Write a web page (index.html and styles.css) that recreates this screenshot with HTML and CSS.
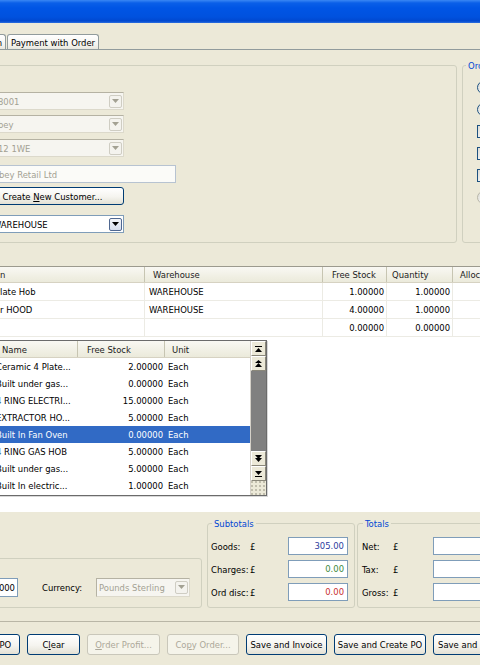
FILE: index.html
```html
<!DOCTYPE html>
<html>
<head>
  <meta charset="utf-8">
  <title>Sales Order</title>
  <link rel="stylesheet" href="styles.css">
</head>
<body>
<div class="titlebar"></div>

<div class="tabstrip">
  <div class="tab tab--cut">n</div>
  <div class="tab">Payment with Order</div>
</div>

<div class="page">
  <div class="top">
    <div class="customer-box">
      <div class="combo is-disabled">
        <span class="combo__text">8001</span>
        <span class="combo__btn"><svg width="7" height="4" viewBox="0 0 7 4"><path d="M0 0h7L3.5 4z"/></svg></span>
      </div>
      <div class="combo is-disabled combo--2">
        <span class="combo__text">bey</span>
        <span class="combo__btn"><svg width="7" height="4" viewBox="0 0 7 4"><path d="M0 0h7L3.5 4z"/></svg></span>
      </div>
      <div class="combo is-disabled combo--3">
        <span class="combo__text">12 1WE</span>
        <span class="combo__btn"><svg width="7" height="4" viewBox="0 0 7 4"><path d="M0 0h7L3.5 4z"/></svg></span>
      </div>
      <div class="field is-disabled">bey Retail Ltd</div>
      <button class="btn btn--customer">Create <u>N</u>ew Customer...</button>
      <div class="combo combo--warehouse">
        <span class="combo__text">WAREHOUSE</span>
        <span class="combo__btn"><svg width="7" height="4" viewBox="0 0 7 4"><path d="M0 0h7L3.5 4z"/></svg></span>
      </div>
    </div>

    <fieldset class="group order-box">
      <legend>Order Type</legend>
      <span class="radio"></span>
      <span class="radio"></span>
      <span class="check"></span>
      <span class="check"></span>
      <span class="check"></span>
      <span class="radio is-disabled"></span>
    </fieldset>
  </div>

  <div class="grid">
    <div class="grid__row grid__head">
      <div class="c1">n</div>
      <div class="c2">Warehouse</div>
      <div class="c3">Free Stock</div>
      <div class="c4">Quantity</div>
      <div class="c5">Alloc</div>
    </div>
    <div class="grid__row">
      <div class="c1 cut">Plate Hob</div>
      <div class="c2">WAREHOUSE</div>
      <div class="c3 num-cell">1.00000</div>
      <div class="c4 num-cell">1.00000</div>
      <div class="c5"></div>
    </div>
    <div class="grid__row">
      <div class="c1">r HOOD</div>
      <div class="c2">WAREHOUSE</div>
      <div class="c3 num-cell">4.00000</div>
      <div class="c4 num-cell">1.00000</div>
      <div class="c5"></div>
    </div>
    <div class="grid__row">
      <div class="c1"></div>
      <div class="c2"></div>
      <div class="c3 num-cell">0.00000</div>
      <div class="c4 num-cell">0.00000</div>
      <div class="c5"></div>
    </div>

    <div class="lookup">
      <div class="lookup__list">
        <div class="lookup__row lookup__head">
          <div class="l-name">Name</div>
          <div class="l-stock">Free Stock</div>
          <div class="l-unit">Unit</div>
        </div>
        <div class="lookup__row">
          <div class="l-name">Ceramic 4 Plate...</div><div class="l-stock">2.00000</div><div class="l-unit">Each</div>
        </div>
        <div class="lookup__row">
          <div class="l-name">Built under gas...</div><div class="l-stock">0.00000</div><div class="l-unit">Each</div>
        </div>
        <div class="lookup__row">
          <div class="l-name">4 RING ELECTRI...</div><div class="l-stock">15.00000</div><div class="l-unit">Each</div>
        </div>
        <div class="lookup__row">
          <div class="l-name">EXTRACTOR HO...</div><div class="l-stock">5.00000</div><div class="l-unit">Each</div>
        </div>
        <div class="lookup__row is-selected">
          <div class="l-name">Built In Fan Oven</div><div class="l-stock">0.00000</div><div class="l-unit">Each</div>
        </div>
        <div class="lookup__row">
          <div class="l-name">4 RING GAS HOB</div><div class="l-stock">5.00000</div><div class="l-unit">Each</div>
        </div>
        <div class="lookup__row">
          <div class="l-name">Built under gas...</div><div class="l-stock">5.00000</div><div class="l-unit">Each</div>
        </div>
        <div class="lookup__row">
          <div class="l-name">Built In electric...</div><div class="l-stock">1.00000</div><div class="l-unit">Each</div>
        </div>
      </div>
      <div class="lookup__scroll">
        <span class="sb-btn"><svg width="7" height="6" viewBox="0 0 7 6"><path d="M0 0h7v1H0zM3.5 2L7 6H0z"/></svg></span>
        <span class="sb-btn"><svg width="7" height="7" viewBox="0 0 7 7"><path d="M3.5 0L7 3H0zM3.5 3L7 7H0z"/></svg></span>
        <span class="sb-track"></span>
        <span class="sb-btn"><svg width="7" height="7" viewBox="0 0 7 7"><path d="M0 0h7L3.5 4zM0 3h7L3.5 7z"/></svg></span>
        <span class="sb-btn"><svg width="7" height="6" viewBox="0 0 7 6"><path d="M0 0h7L3.5 4zM0 5h7v1H0z"/></svg></span>
        <span class="sb-grip"></span>
      </div>
    </div>
  </div>

  <div class="bottom">
    <div class="rate-box">
      <div class="field field--rate">000</div>
      <span class="rate-label">Currency:</span>
      <div class="combo is-disabled combo--currency">
        <span class="combo__text">Pounds Sterling</span>
        <span class="combo__btn"><svg width="7" height="4" viewBox="0 0 7 4"><path d="M0 0h7L3.5 4z"/></svg></span>
      </div>
    </div>

    <fieldset class="group sums sums--sub">
      <legend>Subtotals</legend>
      <span>Goods:</span><span>£</span><div class="amount amount--blue">305.00</div>
      <span>Charges:</span><span>£</span><div class="amount amount--green">0.00</div>
      <span>Ord disc:</span><span>£</span><div class="amount amount--red">0.00</div>
    </fieldset>

    <fieldset class="group sums sums--total">
      <legend>Totals</legend>
      <span>Net:</span><span>£</span><div class="amount"></div>
      <span>Tax:</span><span>£</span><div class="amount"></div>
      <span>Gross:</span><span>£</span><div class="amount"></div>
    </fieldset>
  </div>

  <div class="actions">
    <button class="btn btn--po">Create PO</button>
    <button class="btn btn--clear">C<u>l</u>ear</button>
    <button class="btn btn--profit" disabled><u>O</u>rder Profit...</button>
    <button class="btn btn--copy" disabled>Co<u>p</u>y Order...</button>
    <button class="btn btn--invoice">Save and Invoice</button>
    <button class="btn btn--createpo">Save and Create PO</button>
    <button class="btn btn--createpo">Save and Despatch</button>
  </div>
</div>
</body>
</html>
```

FILE: styles.css
```css
* {
	box-sizing: border-box;
}

body {
	margin: 0;
	width: 480px;
	height: 665px;
	overflow: hidden;
	background: #ece9d8;
	font-family: "DejaVu Sans Condensed", "DejaVu Sans", sans-serif;
	font-size: 9.4px;
	color: #000;
}

button {
	font: inherit;
	color: inherit;
	padding: 0;
}

u {
	text-decoration-thickness: 1px;
	text-underline-offset: 1px;
}

.titlebar {
	height: 23px;
	background: linear-gradient(#3a87f4 0, #0a5fe8 3px, #0055e5 8px, #0051de 17px, #0048cf 21px, #2d6fe0 23px);
}

/* tabs */
.tabstrip {
	display: flex;
	gap: 1px;
	margin-top: 11px;
	height: 16px;
	border-bottom: 1px solid #919b9c;
}

.tab {
	display: flex;
	align-items: center;
	padding: 0 3px 0 3px;
	border: 1px solid #919b9c;
	border-bottom: 0;
	border-radius: 3px 3px 0 0;
	background: linear-gradient(#fff, #f4f3ee 70%, #e8e7de);
	white-space: nowrap;
}

.tab--cut {
	margin-left: -20px;
	width: 26px;
	justify-content: flex-end;
	padding-right: 3px;
}

.page {
	padding-top: 9.5px;
}

/* top part */
.top {
	display: grid;
	grid-template-columns: 487px 120px;
	column-gap: 5px;
	align-items: start;
	margin-left: -30px;
}

.customer-box {
	margin-top: 5.5px;
	height: 178px;
	border: 1px solid #d0d0bf;
	border-radius: 3px;
	padding: 26px 0 0 10px;
	display: flex;
	flex-direction: column;
	align-items: flex-start;
}

.combo {
	width: 143px;
	height: 18px;
	display: flex;
	align-items: center;
	border: 1px solid #7f9db9;
	background: #fff;
	padding: 0 1px 0 16px;
}

.combo__text {
	flex: 1;
	white-space: nowrap;
	overflow: hidden;
}

.combo__btn {
	width: 13px;
	height: 13px;
	display: flex;
	align-items: center;
	justify-content: center;
	border: 1px solid #4f6790;
	border-radius: 2px;
	background: linear-gradient(#f3f5fa, #d6dded);
}

.combo.is-disabled {
	border-color: #b5b2a3 #dcd9cb #dcd9cb #b5b2a3;
	background: #f6f5f0;
	color: #a3a193;
}

.combo.is-disabled .combo__btn {
	border-color: #cfcdc3;
	background: #f4f3ee;
	fill: #a3a193;
}

.combo--2 {
	margin-top: 5px;
}

.combo--3 {
	margin-top: 6px;
}

.combo--warehouse {
	margin-top: 10px;
	padding-left: 11px;
}

.field {
	height: 18px;
	display: flex;
	align-items: center;
	border: 1px solid #7f9db9;
	background: #fff;
	white-space: nowrap;
	overflow: hidden;
}

.field.is-disabled {
	margin-top: 8px;
	width: 195px;
	padding-left: 17px;
	border-color: #b7c3d1;
	background: #fbfbf8;
	color: #a3a193;
}

.btn {
	height: 18px;
	border: 1px solid #003c74;
	border-radius: 3px;
	background: linear-gradient(#fff, #f5f4ef 55%, #e3e1d5);
	white-space: nowrap;
	overflow: hidden;
}

.btn:disabled {
	border-color: #c9c7ba;
	background: #f5f4ea;
	color: #aca899;
}

.btn--customer {
	margin-top: 4px;
	width: 143px;
}

.order-box {
	padding: 10px 0 0 14px;
	display: flex;
	flex-direction: column;
	align-items: flex-start;
	gap: 9px;
	height: 183.5px;
}

.order-box legend {
	margin-left: -11px;
}

.radio,
.check {
	flex: none;
	width: 13px;
	height: 13px;
	border: 1px solid #1c5180;
	background: linear-gradient(135deg, #dcdcd6, #fff);
}

.radio {
	border-radius: 50%;
}

.radio.is-disabled {
	border-color: #b8b6a9;
}

/* groupboxes */
.group {
	margin: 0;
	min-width: 0;
	border: 1px solid #d0d0bf;
	border-radius: 3px;
}

.group legend {
	padding: 0 2px;
	color: #0046d5;
	line-height: 11px;
	white-space: nowrap;
}

/* order lines grid */
.grid {
	position: relative;
	margin-top: 23px;
	height: 246px;
	background: #fff;
	border-top: 1px solid #9c9a8e;
}

.grid__row {
	display: flex;
	height: 18px;
	border-bottom: 1px solid #ecebe4;
}

.grid__row > div {
	display: flex;
	align-items: center;
	white-space: nowrap;
	overflow: hidden;
	border-right: 1px solid #ecebe4;
	padding-left: 4px;
}

.grid__head {
	height: 16px;
	background: linear-gradient(#f9f8f3, #ebeadb);
	border-bottom: 1px solid #d6d2c2;
}

.grid__head > div {
	border-right-color: #c7c5b2;
	color: #222;
}

.c1 {
	width: 145px;
	padding-left: 0 !important;
}

.c2 {
	width: 178px;
}

.c3 {
	width: 64px;
}

.c4 {
	width: 66px;
}

.c5 {
	flex: 1;
	border-right: 0 !important;
}

.grid__head .c2 {
	padding-left: 8px;
}

.grid__head .c3 {
	padding-left: 9px;
}

.grid__head .c4 {
	padding-left: 5px;
}

.grid__head .c5 {
	padding-left: 7px;
}

.cut {
	text-indent: -5px;
}

.num-cell {
	justify-content: flex-end;
	padding: 0 2px 0 0 !important;
}

/* product lookup dropdown */
.lookup {
	position: absolute;
	top: 73px;
	left: -6px;
	width: 273px;
	height: 156px;
	display: flex;
	border: 1px solid #6b6b6b;
	background: #fff;
	box-shadow: 1px 1px 0 #d8d8d8;
}

.lookup__list {
	flex: 1;
	overflow: hidden;
}

.lookup__row {
	display: flex;
	height: 17px;
	align-items: center;
	white-space: nowrap;
}

.lookup__head {
	background: linear-gradient(#f9f8f3, #ebeadb);
	border-bottom: 1px solid #d6d2c2;
	color: #222;
}

.lookup__row > div {
	overflow: hidden;
}

.l-name {
	width: 83px;
	padding-left: 1px;
}

.l-stock {
	width: 87px;
	text-align: right;
	padding-right: 2px;
}

.l-unit {
	flex: 1;
	padding-left: 3px;
}

.lookup__head > div {
	height: 100%;
	display: flex;
	align-items: center;
	border-right: 1px solid #c7c5b2;
}

.lookup__head .l-name {
	padding-left: 7px;
}

.lookup__head .l-stock {
	padding-left: 9px;
	justify-content: flex-start;
}

.lookup__head .l-unit {
	padding-left: 7px;
	border-right: 0;
}

.is-selected {
	background: #316ac5;
	color: #fff;
}

.lookup__scroll {
	width: 16px;
	display: flex;
	flex-direction: column;
	border-left: 1px solid #d4d0c8;
}

.sb-btn {
	height: 15px;
	display: flex;
	align-items: center;
	justify-content: center;
	background: #ece9d8;
	border: 1px solid;
	border-color: #fff #8a877a #8a877a #fff;
}

.sb-track {
	flex: 1;
	background: #808080;
}

.sb-grip {
	height: 14px;
	background:
		radial-gradient(circle, #a9a695 0.6px, transparent 0.9px) 3px 3px / 4px 4px,
		#ece9d8;
}

/* totals */
.bottom {
	display: flex;
	align-items: flex-start;
	padding-top: 5.5px;
	height: 96px;
}

.rate-box {
	flex: none;
	margin: 40.5px 0 0 -30px;
	width: 232px;
	height: 50px;
	padding: 8px 0 0 10px;
	display: flex;
	align-items: center;
	border: 1px solid #d0d0bf;
	border-radius: 3px;
}

.field--rate {
	width: 37px;
	height: 19px;
	justify-content: flex-end;
	padding-right: 2px;
}

.rate-label {
	width: 54px;
	margin-left: 24px;
}

.combo--currency {
	width: 94px;
	height: 19px;
	padding-left: 2px;
}

.sums {
	flex: none;
	height: 90.5px;
	display: grid;
	align-content: start;
	align-items: center;
	row-gap: 5px;
	grid-auto-rows: 18px;
}

.sums--sub {
	margin-left: 5px;
	width: 148px;
	padding: 8.5px 7px 0 3px;
	grid-template-columns: 39px 38px 60px;
}

.sums--total {
	margin-left: 2px;
	width: 140px;
	padding: 8.5px 0 0 4px;
	grid-template-columns: 31px 40px 60px;
}

.sums legend {
	margin-left: 1px;
}

.amount {
	height: 18px;
	border: 1px solid #7f9db9;
	background: #fff;
	text-align: right;
	padding-right: 3px;
	line-height: 16px;
}

.amount--blue {
	color: #2b3c9e;
}

.amount--green {
	color: #3c8a3c;
}

.amount--red {
	color: #c83030;
}

/* buttons */
.actions {
	margin-top: 13px;
	padding-top: 12px;
	border-top: 1px solid #b9b6a6;
	display: flex;
	gap: 7px;
}

.actions .btn {
	flex: none;
	height: 21px;
}

.btn--po {
	margin-left: -40px;
	width: 60px;
}

.btn--clear {
	width: 53px;
}

.btn--profit {
	width: 73px;
}

.btn--copy {
	width: 72px;
}

.btn--invoice {
	width: 81px;
}

.btn--createpo {
	width: 92px;
}
```
